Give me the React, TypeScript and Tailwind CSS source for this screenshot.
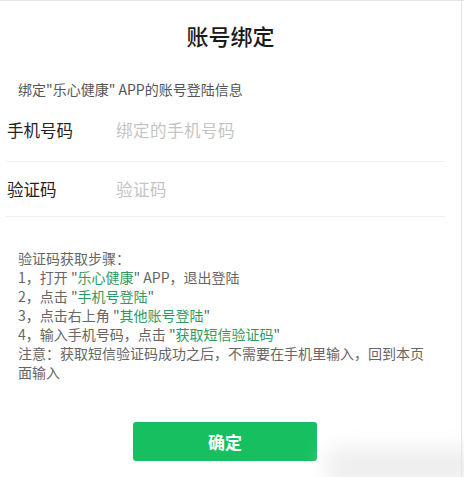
import React from "react";

const G = ({ children }: { children: React.ReactNode }) => (
  <span className="text-[#2f9a5f]">{children}</span>
);

export default function App() {
  return (
    <div
      className="relative w-[464px] h-[477px] bg-white overflow-hidden border-t border-[#e6e6e6]"
      style={{ fontFamily: '"Noto Sans CJK SC", "Liberation Sans", sans-serif' }}
    >
      <div className="w-[462px] h-full border-r border-[#e3e3e3] flex flex-col">
        <div className="pt-[19px] h-[49px] text-center text-[22px] leading-[30px] font-medium text-[#1a1a1a]">
          账号绑定
        </div>
        <div className="mt-[29px] pl-[18px] text-[14px] leading-[20px] text-[#555]">
          绑定"乐心健康" APP的账号登陆信息
        </div>
        <div className="ml-[6px] w-[439px] flex flex-col">
          <div className="h-[63px] flex items-center border-b border-[#f0f0f0] text-[16.5px]">
            <span className="w-[110px] pl-[1px] text-[#222]">手机号码</span>
            <span className="text-[#c4c4c4] tracking-[0.5px]">绑定的手机号码</span>
          </div>
          <div className="h-[55px] flex items-center border-b border-[#f0f0f0] text-[16.5px]">
            <span className="w-[110px] pl-[1px] text-[#222]">验证码</span>
            <span className="text-[#c4c4c4] tracking-[0.5px]">验证码</span>
          </div>
        </div>
        <div className="mt-[32px] pl-[18px] pr-[30px] text-[14px] leading-[19px] text-[#666]">
          <div>验证码获取步骤：</div>
          <div>
            1，打开 "<G>乐心健康</G>" APP，退出登陆
          </div>
          <div>
            2，点击 "<G>手机号登陆</G>"
          </div>
          <div>
            3，点击右上角 "<G>其他账号登陆</G>"
          </div>
          <div>
            4，输入手机号码，点击 "<G>获取短信验证码</G>"
          </div>
          <div>注意：获取短信验证码成功之后，不需要在手机里输入，回到本页面输入</div>
        </div>
        <div className="mt-[40px] pl-[133px]">
          <button className="w-[184px] h-[39px] rounded-[3px] bg-[#16c060] text-white text-[17px] font-bold">
            确定
          </button>
        </div>
      </div>
      <div className="absolute right-[-20px] bottom-[-10px] w-[160px] h-[40px] rounded-full bg-[#e8e8e8] blur-[10px] opacity-70" />
    </div>
  );
}
